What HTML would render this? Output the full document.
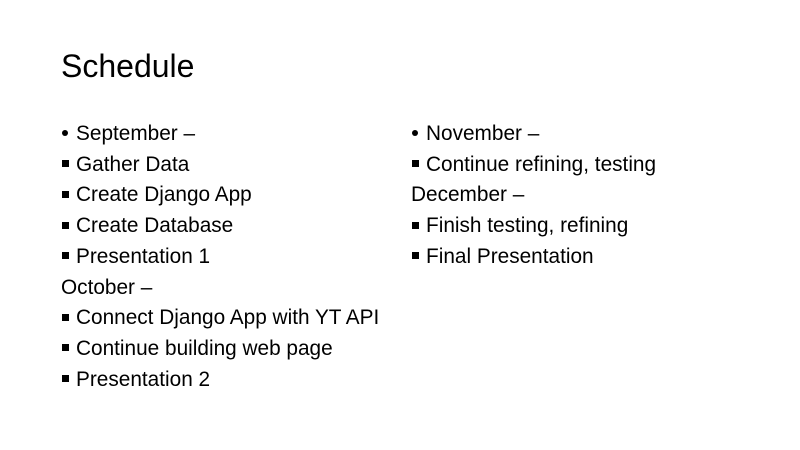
<!DOCTYPE html>
<html><head><style>
body{margin:0;width:800px;height:450px;background:#fff;overflow:hidden;font-family:"Liberation Sans",sans-serif;color:#000;position:relative}
.t{position:absolute;left:61px;top:48px;font-size:32px;font-weight:normal}
.c{position:absolute;top:119px;font-size:20.8px;line-height:30.7px}
.c div{white-space:nowrap}
.sq{display:inline-block;width:7px;height:7px;background:#000;margin:0 7px 3px 1px;vertical-align:middle}
.dot{display:inline-block;width:6px;height:6px;border-radius:50%;background:#000;margin:0 8px 3px 1px;vertical-align:middle}
</style></head><body>
<div class="t">Schedule</div>
<div class="c" style="left:61px">
<div><span class="dot"></span>September –</div>
<div><span class="sq"></span>Gather Data</div>
<div><span class="sq"></span>Create Django App</div>
<div><span class="sq"></span>Create Database</div>
<div><span class="sq"></span>Presentation 1</div>
<div>October –</div>
<div><span class="sq"></span>Connect Django App with YT API</div>
<div><span class="sq"></span>Continue building web page</div>
<div><span class="sq"></span>Presentation 2</div>
</div>
<div class="c" style="left:411px">
<div><span class="dot"></span>November –</div>
<div><span class="sq"></span>Continue refining, testing</div>
<div>December –</div>
<div><span class="sq"></span>Finish testing, refining</div>
<div><span class="sq"></span>Final Presentation</div>
</div>
</body></html>
